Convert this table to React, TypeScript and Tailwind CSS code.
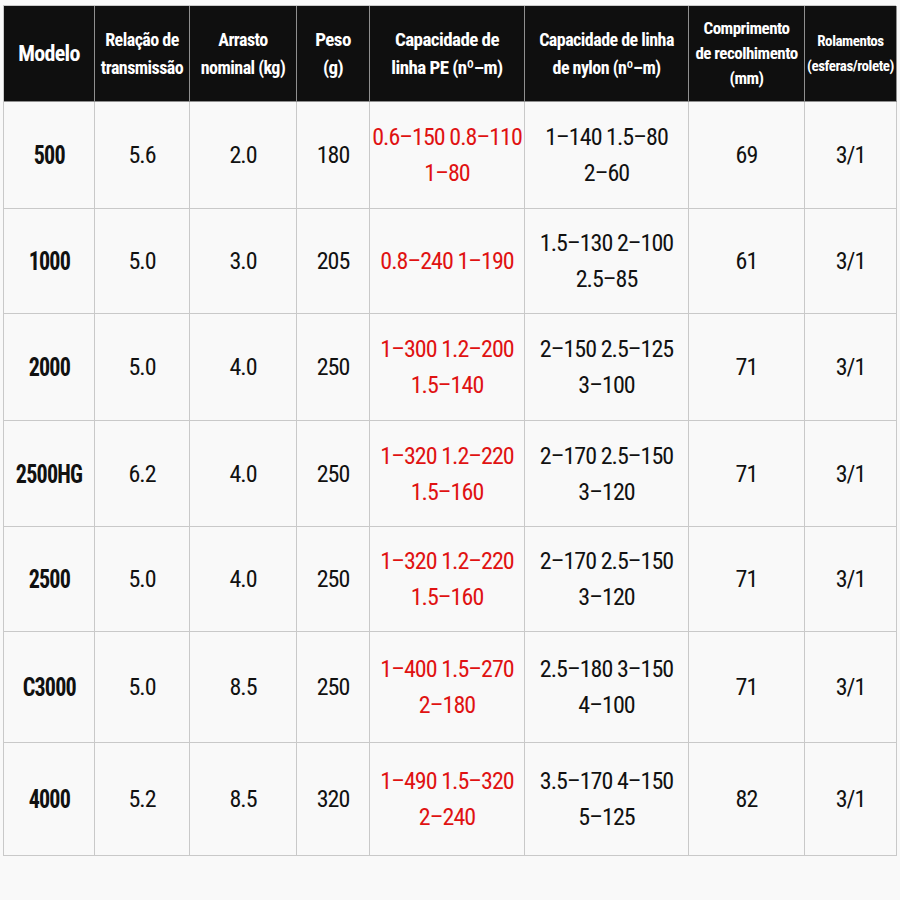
import React from "react";

type Row = {
  modelo: string;
  rel: string;
  arrasto: string;
  peso: string;
  pe: string[];
  nylon: string[];
  comp: string;
  rol: string;
  h: string;
};

const linhas: Row[] = [
  { modelo: "500", rel: "5.6", arrasto: "2.0", peso: "180", pe: ["0.6–150 0.8–110", "1–80"], nylon: ["1–140 1.5–80", "2–60"], comp: "69", rol: "3/1", h: "h-[107px]" },
  { modelo: "1000", rel: "5.0", arrasto: "3.0", peso: "205", pe: ["0.8–240 1–190"], nylon: ["1.5–130 2–100", "2.5–85"], comp: "61", rol: "3/1", h: "h-[105px]" },
  { modelo: "2000", rel: "5.0", arrasto: "4.0", peso: "250", pe: ["1–300 1.2–200", "1.5–140"], nylon: ["2–150 2.5–125", "3–100"], comp: "71", rol: "3/1", h: "h-[107px]" },
  { modelo: "2500HG", rel: "6.2", arrasto: "4.0", peso: "250", pe: ["1–320 1.2–220", "1.5–160"], nylon: ["2–170 2.5–150", "3–120"], comp: "71", rol: "3/1", h: "h-[106px]" },
  { modelo: "2500", rel: "5.0", arrasto: "4.0", peso: "250", pe: ["1–320 1.2–220", "1.5–160"], nylon: ["2–170 2.5–150", "3–120"], comp: "71", rol: "3/1", h: "h-[105px]" },
  { modelo: "C3000", rel: "5.0", arrasto: "8.5", peso: "250", pe: ["1–400 1.5–270", "2–180"], nylon: ["2.5–180 3–150", "4–100"], comp: "71", rol: "3/1", h: "h-[111px]" },
  { modelo: "4000", rel: "5.2", arrasto: "8.5", peso: "320", pe: ["1–490 1.5–320", "2–240"], nylon: ["3.5–170 4–150", "5–125"], comp: "82", rol: "3/1", h: "h-[113px]" },
];

const colunas = "grid-cols-[91px_95px_107px_73px_155px_164px_116px_92px]";

function Head({ children, size }: { children: React.ReactNode; size: string }) {
  return (
    <div
      className={`flex items-center justify-center whitespace-nowrap border-r border-b border-[#8f8f8f] bg-[#0f0f0f] text-center font-bold tracking-[-0.03em] text-white ${size}`}
    >
      <span>{children}</span>
    </div>
  );
}

function Cell({ children, className = "" }: { children: React.ReactNode; className?: string }) {
  return (
    <div
      className={`flex flex-col items-center justify-center whitespace-nowrap border-r border-b border-[#c9c9c9] text-center text-[24px] leading-[36px] tracking-[-0.04em] text-[#111] ${className}`}
    >
      {children}
    </div>
  );
}

export default function App() {
  return (
    <div className="h-[900px] w-[900px] bg-[#f9f9f9] pl-[3px] pt-[5px] font-['Roboto',sans-serif] [font-stretch:75%]">
      <div className={`grid w-[893px] ${colunas} border-l border-t border-[#c9c9c9]`}>
        {/* cabeçalho */}
        <Head size="h-[96px] text-[22px] leading-[28px]">Modelo</Head>
        <Head size="text-[18px] leading-[28px]">
          Relação de
          <br />
          transmissão
        </Head>
        <Head size="text-[18px] leading-[28px]">
          Arrasto
          <br />
          nominal (kg)
        </Head>
        <Head size="text-[19px] leading-[28px]">
          Peso
          <br />
          (g)
        </Head>
        <Head size="text-[19px] leading-[28px]">
          Capacidade de
          <br />
          linha PE (nº–m)
        </Head>
        <Head size="text-[18px] leading-[28px]">
          Capacidade de linha
          <br />
          de nylon (nº–m)
        </Head>
        <Head size="text-[17px] leading-[25px]">
          Comprimento
          <br />
          de recolhimento
          <br />
          (mm)
        </Head>
        <Head size="text-[15px] leading-[25px]">
          Rolamentos
          <br />
          (esferas/rolete)
        </Head>

        {linhas.map((l) => (
          <React.Fragment key={l.modelo}>
            <Cell className={`${l.h} font-bold tracking-[-0.03em]`}>
              <span className="inline-block scale-x-[0.85] text-[26px]">{l.modelo}</span>
            </Cell>
            <Cell>{l.rel}</Cell>
            <Cell>{l.arrasto}</Cell>
            <Cell>{l.peso}</Cell>
            <Cell className="text-[#e01212]">
              {l.pe.map((t) => (
                <span key={t}>{t}</span>
              ))}
            </Cell>
            <Cell>
              {l.nylon.map((t) => (
                <span key={t}>{t}</span>
              ))}
            </Cell>
            <Cell>{l.comp}</Cell>
            <Cell>{l.rol}</Cell>
          </React.Fragment>
        ))}
      </div>
    </div>
  );
}
